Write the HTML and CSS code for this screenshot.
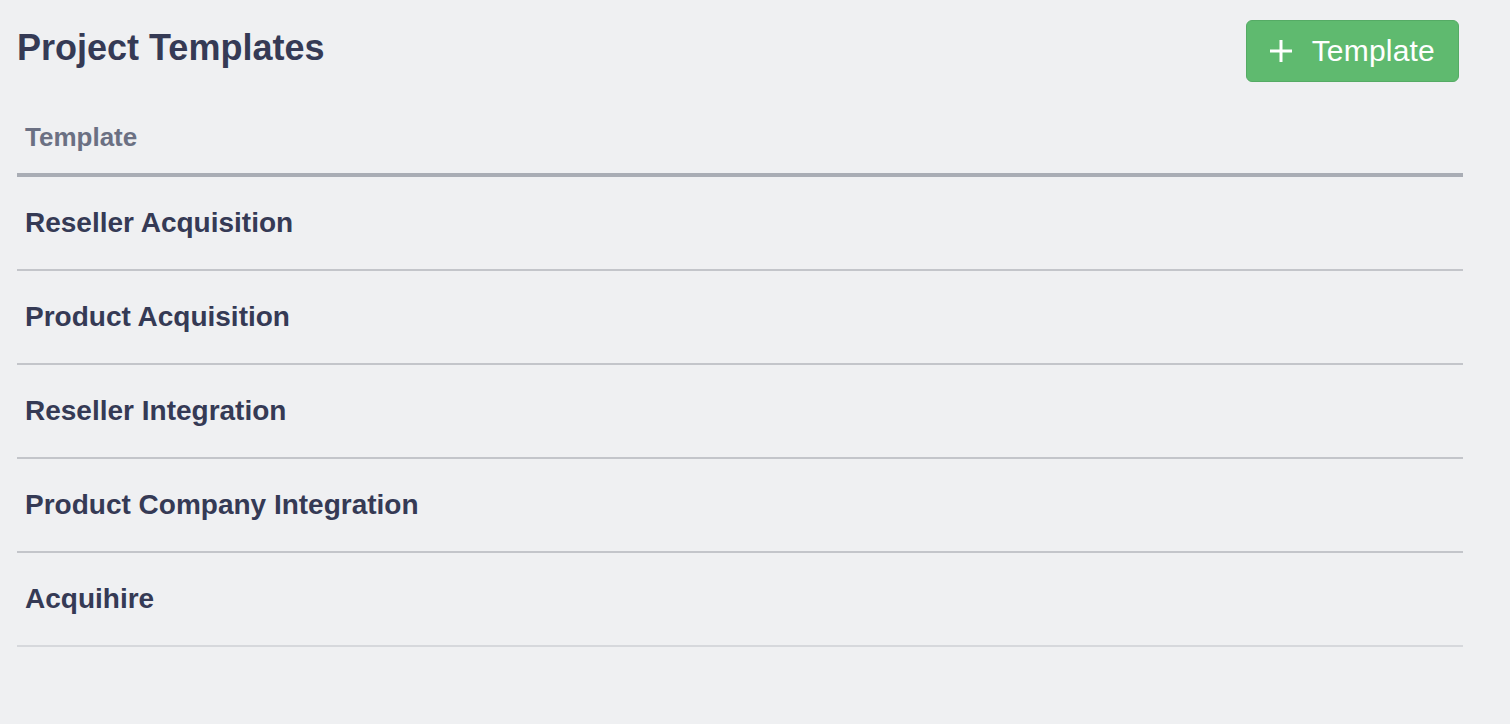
FILE: index.html
```html
<!DOCTYPE html>
<html lang="en">
<head>
    <meta charset="UTF-8">
    <meta name="viewport" content="width=device-width, initial-scale=1.0">
    <title>Project Templates</title>
    <link rel="stylesheet" href="styles.css">
</head>
<body>
    <div class="page">
        <div class="topbar">
            <h1>Project Templates</h1>
            <button class="add-button">
                <svg class="plus" width="22" height="22" viewBox="0 0 22 22">
                    <path d="M11 0 V22 M0 11 H22" stroke="#fff" stroke-width="3" fill="none"/>
                </svg>
                <span>Template</span>
            </button>
        </div>
        <table class="templates">
            <thead>
                <tr><th>Template</th></tr>
            </thead>
            <tbody>
                <tr><td>Reseller Acquisition</td></tr>
                <tr><td>Product Acquisition</td></tr>
                <tr><td>Reseller Integration</td></tr>
                <tr><td>Product Company Integration</td></tr>
                <tr><td>Acquihire</td></tr>
            </tbody>
        </table>
    </div>
</body>
</html>
```

FILE: styles.css
```css
body {
    font-family: "Liberation Sans", Arial, sans-serif;
    background-color: #eff0f2;
    margin: 0;
}
.page {
    padding: 20px 47px 0 17px;
}
.topbar {
    display: flex;
    justify-content: space-between;
    align-items: flex-start;
    padding-right: 4px;
}
h1 {
    margin: 7px 0 0 0;
    font-size: 36px;
    font-weight: bold;
    color: #353a55;
    line-height: 41px;
}
.add-button {
    display: flex;
    align-items: center;
    gap: 20px;
    height: 62px;
    padding: 0 23px;
    border: 1px solid #55ab65;
    border-radius: 6px;
    background-color: #5fba6f;
    color: #fff;
    font-family: "Liberation Sans", Arial, sans-serif;
    font-size: 30px;
    letter-spacing: 0.2px;
    cursor: pointer;
}
.templates {
    width: 100%;
    margin-top: 21px;
    border-collapse: collapse;
}
.templates th {
    text-align: left;
    padding: 20px 8px 21px;
    font-size: 26px;
    line-height: 29px;
    color: #6b7083;
    border-bottom: 4px solid #a9adb5;
}
.templates td {
    padding: 30px 8px 30px;
    font-size: 28px;
    line-height: 32px;
    font-weight: bold;
    color: #353a55;
    border-bottom: 2px solid #c3c5ca;
}
.templates tr:last-child td {
    border-bottom-color: #d6d8dc;
}
```
